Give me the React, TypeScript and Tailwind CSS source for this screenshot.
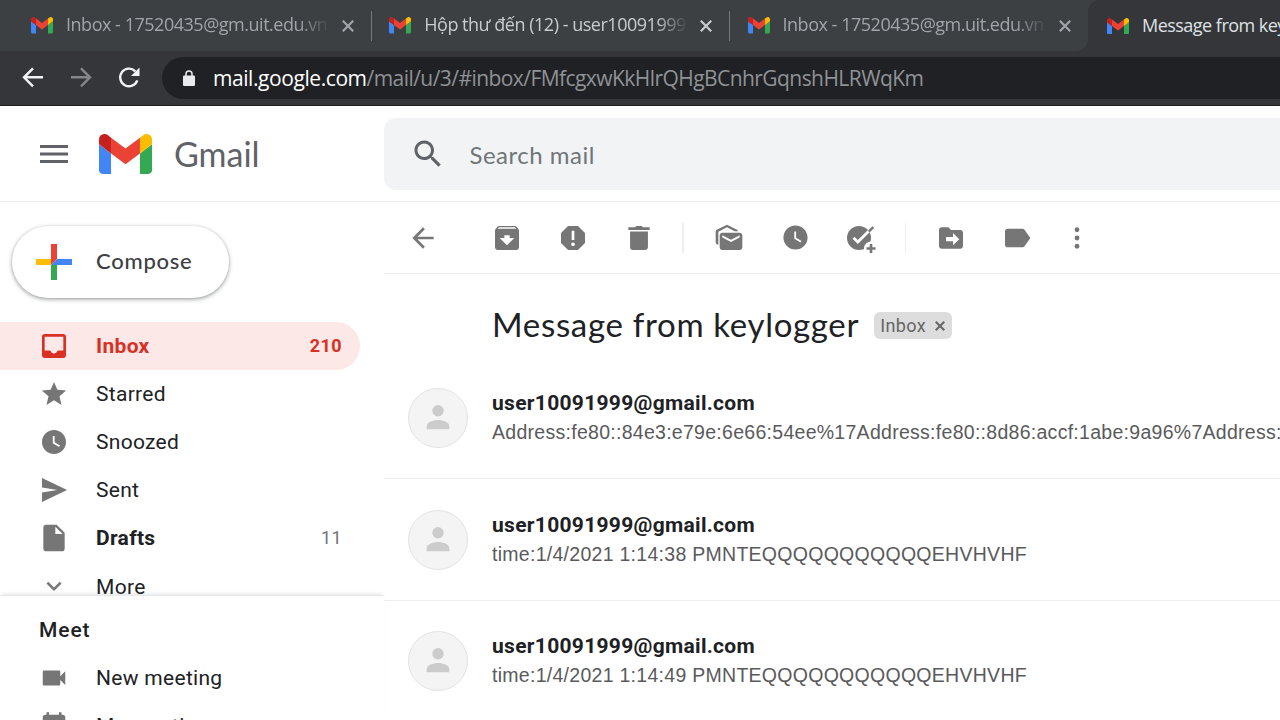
import type { ReactNode } from "react";

function Icon({ size = 32, className = "", children }: { size?: number; className?: string; children: ReactNode }) {
  return (
    <svg viewBox="0 0 24 24" width={size} height={size} fill="currentColor" className={`shrink-0 ${className}`}>
      {children}
    </svg>
  );
}

function GmailMark({ className }: { className: string }) {
  return (
    <svg viewBox="52 42 88 66" className={`shrink-0 ${className}`} preserveAspectRatio="none">
      <path fill="#4285f4" d="M58 108h14V74L52 59v43c0 3.32 2.69 6 6 6" />
      <path fill="#34a853" d="M120 108h14c3.32 0 6-2.69 6-6V59l-20 15" />
      <path fill="#fbbc04" d="M120 48v26l20-15v-8c0-7.42-8.47-11.65-14.4-7.2" />
      <path fill="#ea4335" d="M72 74V48l24 18 24-18v26L96 92" />
      <path fill="#c5221f" d="M52 51v8l20 15V48l-5.6-4.2c-5.94-4.45-14.4-.22-14.4 7.2" />
    </svg>
  );
}

const clock = (
  <path d="M12 2C6.5 2 2 6.5 2 12s4.500 10 10 10 10-4.500 10-10S17.500 2 12 2zm4.200 14.200L11 13V7h1.500v5.200l4.500 2.700-.8 1.300z" />
);

function Tab({ title, tone }: { title: string; tone: string }) {
  return (
    <div className="flex w-[358.5px] shrink-0 items-center">
      <GmailMark className="ml-[18px] h-[16.5px] w-[22px]" />
      <div
        className={`-mt-[3px] ml-[13px] w-[264px] overflow-hidden whitespace-nowrap text-[18px] leading-[28px] tracking-[-0.48px] [mask-image:linear-gradient(to_right,black_88%,transparent)] ${tone}`}
      >
        {title}
      </div>
      <svg viewBox="0 0 12 12" className={`ml-[12px] size-[12px] shrink-0 ${tone}`}>
        <path d="M.8.8l10.400 10.400M11.200.8L.8 11.200" stroke="currentColor" strokeWidth="2.200" />
      </svg>
    </div>
  );
}

function NavRow({
  icon,
  label,
  count,
  rowClass = "",
  iconClass = "text-[#767676]",
  labelClass = "text-[#202124] tracking-[0.3px]",
  countClass = "",
}: {
  icon: ReactNode;
  label: string;
  count?: string;
  rowClass?: string;
  iconClass?: string;
  labelClass?: string;
  countClass?: string;
}) {
  return (
    <div className={`flex h-12 w-[360px] shrink-0 items-center ${rowClass}`}>
      <div className={`ml-[38px] flex w-8 items-center justify-center ${iconClass}`}>{icon}</div>
      <div className={`ml-[26px] flex-1 text-[21px] leading-[30px] ${labelClass}`}>{label}</div>
      <div className={`mr-[18px] text-[18px] leading-[30px] ${countClass}`}>{count}</div>
    </div>
  );
}

function Message({ snippet, rowClass }: { snippet: string; rowClass: string }) {
  return (
    <div className={`flex shrink-0 border-b-[1.5px] border-[#eceff1] ${rowClass}`}>
      <div className="ml-6 flex size-[60px] shrink-0 items-center justify-center rounded-full border border-[#e3e3e3] bg-[#f4f4f4]">
        <svg viewBox="0 0 24 26" width="24" height="26" fill="#cccccc">
          <circle cx="12" cy="5.700" r="5.700" />
          <path d="M.7 24.200v-3c0-4 6.300-6.200 11.300-6.200s11.300 2.200 11.300 6.200v3z" />
        </svg>
      </div>
      <div className="ml-6 min-w-0 whitespace-nowrap">
        <div className="font-[Roboto] text-[21px] font-bold leading-[30px] tracking-[0.3px] text-[#202124]">
          user10091999@gmail.com
        </div>
        <div className="font-['Liberation_Sans'] text-[19.5px] leading-[28px] tracking-[0.28px] text-[#5a5a5c]">{snippet}</div>
      </div>
    </div>
  );
}

export default function App() {
  return (
    <div className="flex h-[720px] w-[1280px] flex-col overflow-hidden bg-white font-[Roboto,sans-serif]">
      <div className="flex h-[51px] shrink-0 bg-[#35363a] font-['Open_Sans',sans-serif]">
        <div className="flex w-[1088px] shrink-0 items-center rounded-br-[12px] bg-[#3c4043] pl-[13px]">
          <Tab title="Inbox - 17520435@gm.uit.edu.vn" tone="text-[#a1a5a9]" />
          <div className="-ml-px h-[30px] w-[1.5px] bg-[#74777b]" />
          <Tab title="Hộp thư đến (12) - user10091999" tone="text-[#c9cbcd]" />
          <div className="-ml-px h-[30px] w-[1.5px] bg-[#74777b]" />
          <Tab title="Inbox - 17520435@gm.uit.edu.vn" tone="text-[#a1a5a9]" />
        </div>
        <div className="flex flex-1 bg-[#3c4043]">
          <div className="-mb-px flex flex-1 items-center overflow-hidden rounded-tl-[12px] bg-[#35363a]">
            <GmailMark className="ml-[19px] h-[16.5px] w-[22px]" />
            <div className="-mt-[3px] ml-[13px] whitespace-nowrap text-[18px] leading-[28px] tracking-[-0.52px] text-[#dfe1e4]">
              Message from keylogger
            </div>
          </div>
        </div>
      </div>

      <div className="flex h-[55px] shrink-0 border-b border-[#1f2022] bg-[#35363a] pt-[6px]">
        <svg viewBox="0 0 162 42" width="162" height="42" fill="none" strokeWidth="2.400" className="shrink-0">
          <path d="M43 20.300H25M33 11.300l-9 9 9 9" stroke="#f1f3f4" />
          <path d="M71 20.300h18M81 11.300l9 9-9 9" stroke="#85868a" />
          <path d="M137.300 23.300a8.800 8.800 0 1 1-2-9" stroke="#f1f3f4" />
          <path d="M139.500 10.500v8.500h-8.500z" fill="#f1f3f4" />
        </svg>
        <div className="flex h-[42px] flex-1 items-center rounded-l-full bg-[#202124]">
          <svg viewBox="0 0 12 16" width="12" height="16" className="ml-[21px] shrink-0">
            <rect y="5.500" width="12" height="10.500" rx="1.300" fill="#e8eaed" />
            <path d="M3 6V4a3 3 0 0 1 6 0v2" fill="none" stroke="#e8eaed" strokeWidth="1.500" />
          </svg>
          <div className="ml-[18px] whitespace-nowrap font-['Open_Sans',sans-serif] text-[21px] leading-[30px] text-[#8f9296]">
            <span className="tracking-[-0.43px] text-white">mail.google.com</span>
            <span className="tracking-[-0.56px]">/mail/u/3/#inbox/FMfcgxwKkHlrQHgBCnhrGqnshHLRWqKm</span>
          </div>
        </div>
      </div>

      <header className="flex h-24 shrink-0 items-center border-b-[1.5px] border-[#e8eaed]">
        <div className="flex w-[384px] shrink-0 items-center">
          <svg viewBox="0 0 28 18" width="28" height="18" fill="#5f6368" className="ml-10 shrink-0">
            <path d="M0 0h28v3H0zM0 7.500h28v3H0zM0 15h28v3H0z" />
          </svg>
          <GmailMark className="ml-[31px] h-10 w-[53px]" />
          <div className="ml-[22px] font-[Lato] text-[34px] leading-[40px] text-[#5f6368]">Gmail</div>
        </div>
        <div className="flex h-[72px] flex-1 items-center rounded-l-[12px] bg-[#f1f3f4]">
          <Icon size={36} className="ml-[26px] text-[#5f6368]">
            <path d="M15.500 14h-.79l-.28-.27C15.410 12.590 16 11.110 16 9.500 16 5.910 13.090 3 9.500 3S3 5.910 3 9.500 5.910 16 9.500 16c1.610 0 3.090-.59 4.230-1.570l.27.28v.79l5 4.990L20.490 19l-4.990-5zm-6 0C7.010 14 5 11.990 5 9.500S7.010 5 9.500 5 14 7.010 14 9.500 11.990 14 9.500 14z" />
          </Icon>
          <div className="mt-[2px] ml-[23.5px] font-[Lato] text-[24px] leading-[36px] tracking-[0.5px] text-[#70757a]">
            Search mail
          </div>
        </div>
      </header>

      <div className="flex min-h-0 flex-1">
        <aside className="flex w-[384px] shrink-0 flex-col">
          <div className="mt-6 ml-3 flex h-[72px] w-[217px] shrink-0 items-center rounded-full bg-white shadow-[0_1px_3px_rgba(60,64,67,0.35),0_1.5px_4px_1px_rgba(60,64,67,0.2)]">
            <svg viewBox="0 0 36 36" width="36" height="36" className="ml-6 shrink-0">
              <path fill="#ea4335" d="M15 0h6v15l-6 6z" />
              <path fill="#fbbc04" d="M0 15h15v6H0z" />
              <path fill="#34a853" d="M15 21h6v15h-6z" />
              <path fill="#4285f4" d="M21 15h15v6H15z" />
            </svg>
            <div className="-mt-[2px] ml-6 font-[Lato] text-[22px] font-medium leading-[30px] tracking-[0.75px] text-[#3c4043]">
              Compose
            </div>
          </div>

          <nav className="mt-6 flex h-[273px] shrink-0 flex-col overflow-hidden">
            <NavRow
              rowClass="rounded-r-full bg-[#fce8e6]"
              iconClass="text-[#d93025]"
              labelClass="font-bold tracking-[0.3px] text-[#d93025]"
              countClass="font-bold text-[#d93025] tracking-[0.4px]"
              label="Inbox"
              count="210"
              icon={
                <Icon>
                  <path d="M19 3H5c-1.100 0-2 .9-2 2v14c0 1.100.9 2 2 2h14c1.100 0 2-.9 2-2V5c0-1.100-.9-2-2-2zm0 12.300h-3.500c-.6 0-1 .3-1.200.8-.4.9-1.300 1.500-2.300 1.500s-1.900-.6-2.300-1.500c-.2-.5-.6-.8-1.200-.8H5V5h14z" />
                </Icon>
              }
            />
            <NavRow
              label="Starred"
              icon={
                <Icon size={30}>
                  <path d="M12 17l6 3.700-1.600-6.900 5.300-4.600-7-.6L12 2.300 9.300 8.600l-7 .6 5.300 4.600L6 20.700z" />
                </Icon>
              }
            />
            <NavRow
              label="Snoozed"
              icon={
                <svg viewBox="-.5 -.5 25 25" width="30" height="30" fill="currentColor">
                  {clock}
                </svg>
              }
            />
            <NavRow
              label="Sent"
              icon={
                <Icon>
                  <path d="M3 3v7.200l11.500 1.800L3 13.800V21l18.800-9z" />
                </Icon>
              }
            />
            <NavRow
              label="Drafts"
              count="11"
              labelClass="font-bold tracking-[0.3px] text-[#202124]"
              countClass="text-[#70757a] tracking-[0.4px]"
              icon={
                <Icon>
                  <path d="M6 2c-1.100 0-1.990.9-1.990 2L4 20c0 1.100.89 2 1.990 2H18c1.100 0 2-.9 2-2V8l-6-6H6zm7 7V3.500L18.500 9H13z" />
                </Icon>
              }
            />
            <NavRow
              label="More"
              labelClass="text-[#202124] tracking-[0.3px] mt-[2px]"
              icon={
                <Icon size={30}>
                  <path d="M16.590 8.590L12 13.170 7.410 8.590 6 10l6 6 6-6z" />
                </Icon>
              }
            />
          </nav>

          <section className="flex min-h-0 flex-1 flex-col border-t-[1.5px] border-[#e8eaed] pt-[10px] shadow-[0_-3px_3px_-2px_rgba(60,64,67,0.15)]">
            <div className="h-12 shrink-0 pl-[39px] text-[21px] font-medium leading-[48px] tracking-[0.9px] text-[#202124]">
              Meet
            </div>
            <NavRow
              label="New meeting"
              icon={
                <Icon size={30}>
                  <path d="M17 10.500V7c0-.55-.45-1-1-1H4c-.55 0-1 .45-1 1v10c0 .55.45 1 1 1h12c.55 0 1-.45 1-1v-3.500l4 4v-11l-4 4z" />
                </Icon>
              }
            />
            <NavRow
              label="My meetings"
              icon={
                <Icon size={30}>
                  <path d="M16 1v2H8V1H6v2H5c-1.110 0-2 .9-2 2v14c0 1.100.89 2 2 2h14c1.100 0 2-.9 2-2V5c0-1.100-.9-2-2-2h-1V1h-2zm3 18H5V8h14v11z" />
                </Icon>
              }
            />
          </section>
        </aside>

        <main className="flex min-w-0 flex-1 flex-col overflow-hidden">
          <div className="flex h-[72px] shrink-0 items-center border-b-[1.5px] border-[#e9ebed] text-[#767676]">
            <Icon className="ml-[23px]">
              <path d="M20 11H7.830l5.590-5.590L12 4l-8 8 8 8 1.410-1.410L7.830 13H20v-2z" />
            </Icon>
            <Icon className="ml-[52px]">
              <path d="M20.540 5.230l-1.390-1.680C18.880 3.210 18.470 3 18 3H6c-.47 0-.88.21-1.160.55L3.460 5.230C3.170 5.570 3 6.020 3 6.500V19c0 1.100.9 2 2 2h14c1.100 0 2-.9 2-2V6.500c0-.48-.17-.93-.46-1.270zM12 17.500L6.500 12H10v-2h4v2h3.500L12 17.500zM5.120 5l.81-1h12l.94 1H5.120z" />
            </Icon>
            <Icon className="ml-[34px]">
              <path d="M15.730 3H8.270L3 8.270v7.460L8.270 21h7.460L21 15.730V8.270L15.730 3zM12 18.100a1.400 1.400 0 1 1 0-2.800 1.400 1.400 0 0 1 0 2.800zm1-4.600h-2V6.500h2z" />
            </Icon>
            <Icon className="ml-[34px]">
              <path d="M4 4h5l1-1h4l1 1h5v2H4zM5.300 7.200h13.400V19c0 1.100-.9 2-2 2H7.300c-1.100 0-2-.9-2-2z" />
            </Icon>
            <div className="ml-[27px] h-[30px] w-[1.5px] bg-[#eceff1]" />
            <Icon className="ml-[29px]">
              <path d="M18.830 7h-2.600L10.500 4 4 7.400V17c-1.100 0-2-.9-2-2V7.170c0-.53.32-1.090.8-1.340L10.500 2l7.540 3.830c.43.23.73.7.79 1.170zM20 8H7c-1.100 0-2 .9-2 2v9c0 1.100.9 2 2 2h13c1.100 0 2-.9 2-2v-9c0-1.100-.9-2-2-2zm0 3.670L13.500 15 7 11.670V10l6.500 3.330L20 10v1.670z" />
            </Icon>
            <Icon size={29} className="ml-[36px]">{clock}</Icon>
            <svg viewBox="0 0 32 32" width="32" height="32" fill="currentColor" className="ml-[35px] shrink-0">
              <circle cx="14" cy="16" r="12" />
              <path d="M8.500 15.800l4.300 4.300L28.500 4.400" fill="none" stroke="white" strokeWidth="2.800" />
              <path d="M23.800 9.600l4.500-4.500" fill="none" stroke="currentColor" strokeWidth="2.400" />
              <circle cx="26" cy="26.500" r="7" fill="white" />
              <path d="M26 22v9M21.500 26.500h9" stroke="currentColor" strokeWidth="2.600" />
            </svg>
            <div className="ml-[28px] h-[30px] w-[1.5px] bg-[#eceff1]" />
            <Icon className="ml-[29px]">
              <path d="M19 6h-7l-2-2H5c-1.100 0-2 .9-2 2v12c0 1.100.9 2 2 2h14c1.100 0 2-.9 2-2V8c0-1.100-.9-2-2-2zm-5.500 11.500V14.500H8.300v-3.300h5.200V8.300l4.700 4.600z" />
            </Icon>
            <Icon className="ml-[34px]">
              <path d="M17.630 5.840C17.270 5.330 16.670 5 16 5L5 5.010C3.900 5.010 3 5.900 3 7v10c0 1.100.9 1.990 2 1.990L16 19c.67 0 1.270-.33 1.630-.84L22 12l-4.370-6.160z" />
            </Icon>
            <Icon className="ml-[28px]">
              <circle cx="12" cy="5.800" r="1.800" />
              <circle cx="12" cy="12" r="1.800" />
              <circle cx="12" cy="18.200" r="1.800" />
            </Icon>
          </div>

          <div className="flex h-[105px] shrink-0 items-center pl-[108px]">
            <h1 className="-mt-[6px] whitespace-nowrap font-[Lato] text-[33px] leading-[48px] tracking-[0.68px] text-[#202124]">
              Message from keylogger
            </h1>
            <div className="-mt-[2px] ml-[15px] flex h-[27px] items-center rounded-[6px] bg-[#dddddd] pl-[6px] text-[18px] leading-[27px] tracking-[0.4px] text-[#666666]">
              Inbox
              <svg viewBox="0 0 10 10" width="10" height="10" className="mr-[7px] ml-[9px]">
                <path d="M.7.7l8.600 8.600M9.300.7L.7 9.300" stroke="currentColor" strokeWidth="2" />
              </svg>
            </div>
          </div>

          <Message
            rowClass="h-[100px] pt-[9px]"
            snippet="Address:fe80::84e3:e79e:6e66:54ee%17Address:fe80::8d86:accf:1abe:9a96%7Address:fe80::"
          />
          <Message
            rowClass="h-[122px] pt-[31px]"
            snippet="time:1/4/2021 1:14:38 PMNTEQQQQQQQQQQQEHVHVHF"
          />
          <Message
            rowClass="h-[122px] pt-[30px]"
            snippet="time:1/4/2021 1:14:49 PMNTEQQQQQQQQQQQEHVHVHF"
          />
        </main>
      </div>
    </div>
  );
}
